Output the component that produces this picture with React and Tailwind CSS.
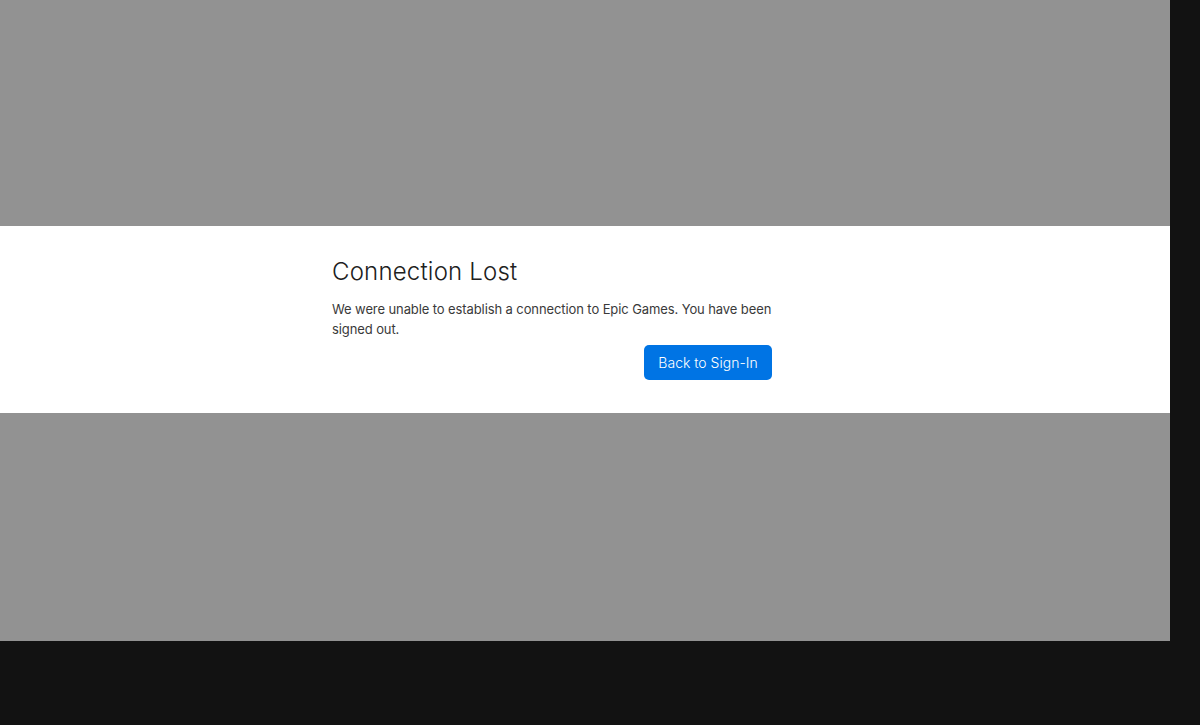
import React from "react";

const App = () => {
  return (
    <div className="w-[1200px] h-[725px] bg-[#121212] overflow-hidden" style={{ fontFamily: "Inter, 'Noto Sans', sans-serif" }}>
      {/* Dimmed app area */}
      <div className="w-[1170px] h-[641px] bg-[#929292] flex flex-col">
        <div className="h-[226px]" />

        {/* Dialog band */}
        <div className="h-[187px] bg-white pt-[30px]">
          <div className="ml-[332px] w-[440px] flex flex-col">
            <h1 className="text-[24px] leading-[32px] font-light text-[#202020] tracking-[0.2px]">
              Connection Lost
            </h1>
            <p className="mt-[11px] text-[13px] leading-[20px] text-[#3a3a3a] tracking-[-0.1px]">
              We were unable to establish a connection to Epic Games. You have been signed out.
            </p>
            <div className="flex justify-end mt-[6px]">
              <button className="w-[128px] h-[35px] rounded-[5px] bg-[#0074e4] text-white text-[14px] font-light">
                Back to Sign-In
              </button>
            </div>
          </div>
        </div>
      </div>
    </div>
  );
};

export default App;
